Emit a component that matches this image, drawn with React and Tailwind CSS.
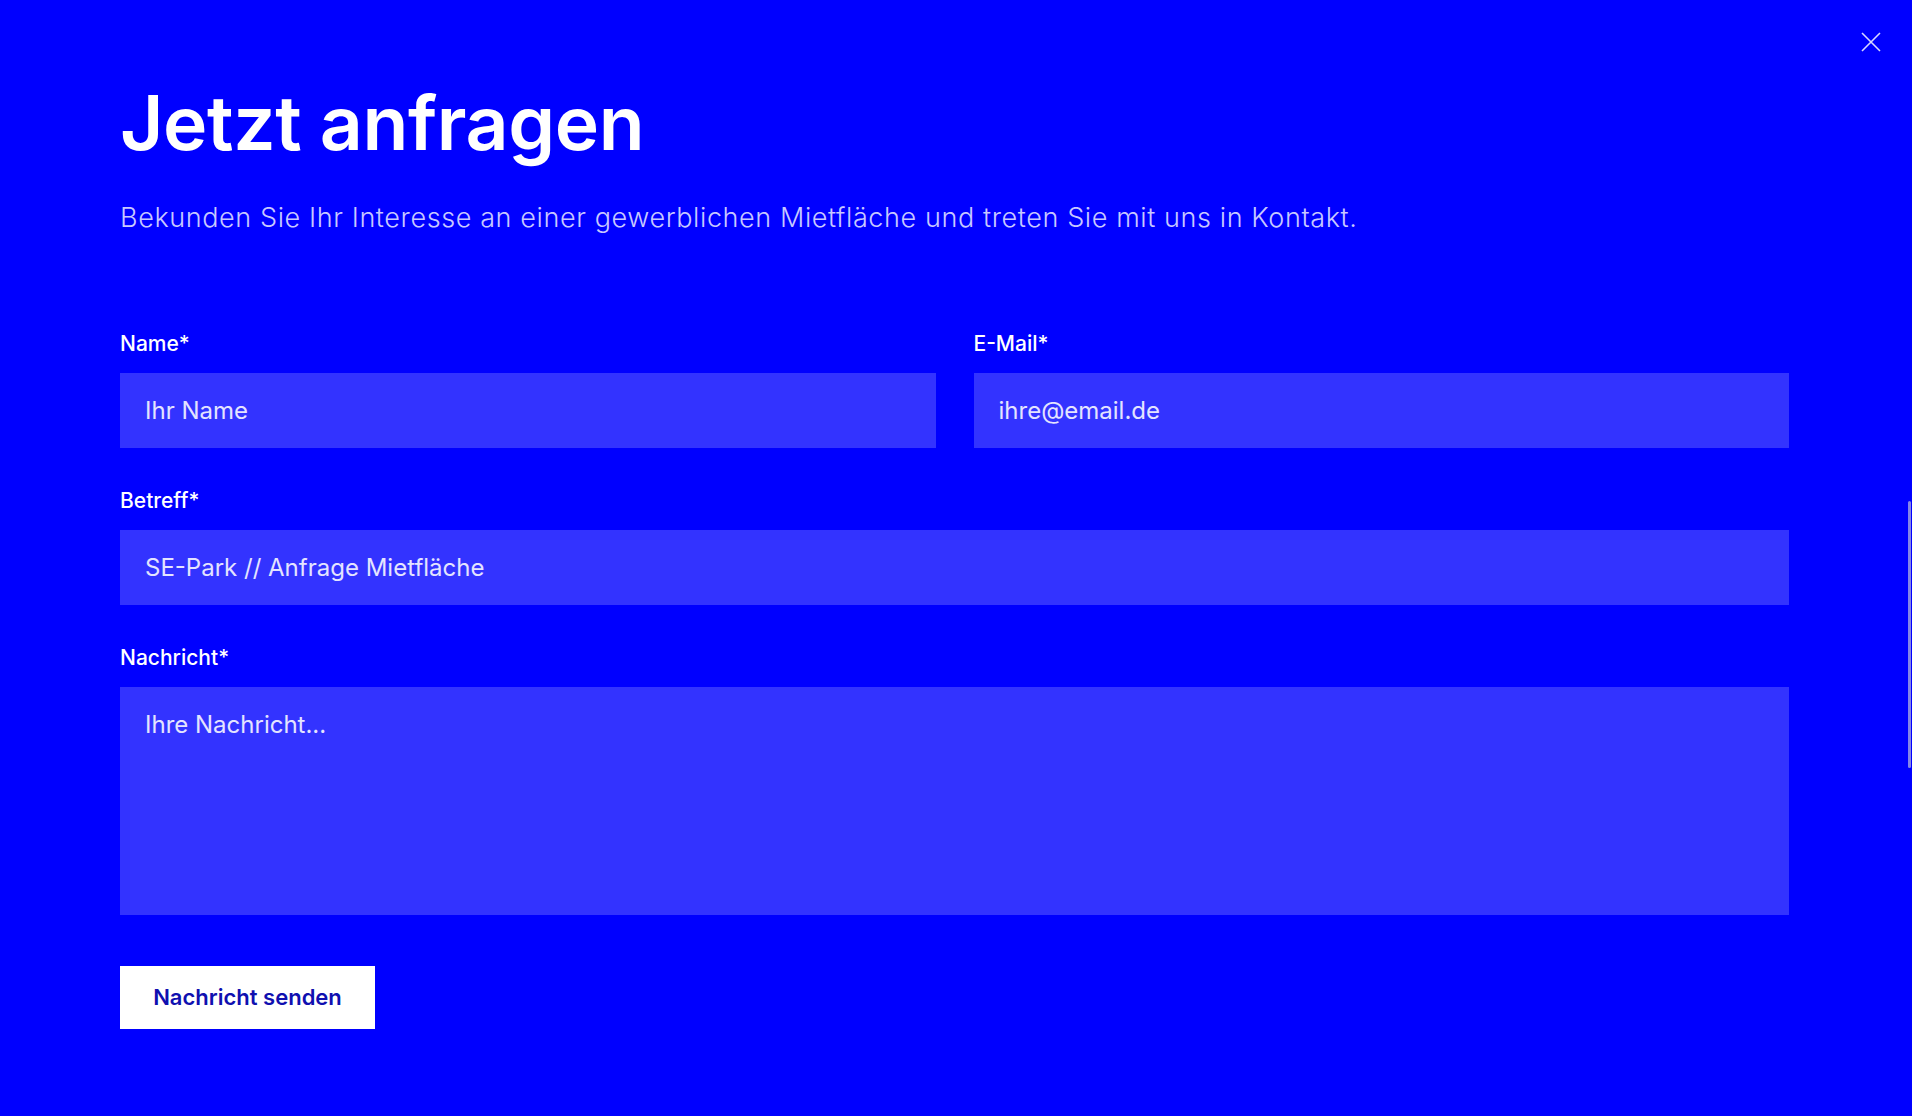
function Field({ label, placeholder, className = '' }) {
  return (
    <label className={`flex flex-col ${className}`}>
      <span className="text-[21px] leading-6 font-medium text-white mb-[17px]">{label}</span>
      <input
        type="text"
        placeholder={placeholder}
        className="h-[75px] bg-[#3333ff] px-[25px] text-[24px] text-white placeholder:text-[#e4e4ff] outline-none"
      />
    </label>
  );
}

export default function App() {
  return (
    <div
      className="relative min-h-[1116px] bg-[#0000ff] pl-[120px] pr-[123px] pt-[79px] text-white"
      style={{ fontFamily: 'Inter, "Noto Sans", sans-serif' }}
    >
      {/* close */}
      <button className="absolute top-[32px] right-[31px] text-[#d8d8ff]">
        <svg width="20" height="20" viewBox="0 0 20 20" fill="none" stroke="currentColor" strokeWidth="1.6">
          <path d="M1 1L19 19M19 1L1 19" />
        </svg>
      </button>

      {/* scrollbar thumb */}
      <div className="absolute right-[1px] top-[501px] w-[3px] h-[267px] rounded-full bg-[#8585e8]"></div>

      <h1 className="text-[75px] leading-[88px] font-semibold tracking-[-0.005em]">Jetzt anfragen</h1>
      <p className="mt-[35px] text-[27px] leading-8 font-light tracking-[0.6px] text-[#c8c8ff]">
        Bekunden Sie Ihr Interesse an einer gewerblichen Mietfläche und treten Sie mit uns in Kontakt.
      </p>

      <form className="mt-[98px] flex flex-col gap-[41px]" onSubmit={(e) => e.preventDefault()}>
        <div className="grid grid-cols-2 gap-[38px]">
          <Field label="Name*" placeholder="Ihr Name" />
          <Field label="E-Mail*" placeholder="ihre@email.de" />
        </div>
        <Field label="Betreff*" placeholder="SE-Park // Anfrage Mietfläche" />
        <label className="flex flex-col">
          <span className="text-[21px] leading-6 font-medium text-white mb-[17px]">Nachricht*</span>
          <textarea
            placeholder="Ihre Nachricht..."
            className="h-[228px] resize-none bg-[#3333ff] px-[25px] py-[20px] text-[24px] text-white placeholder:text-[#e4e4ff] outline-none"
          ></textarea>
        </label>
        <div className="pt-[10px]">
          <button className="h-[63px] w-[255px] bg-white text-[22px] font-semibold text-[#1010b0]">
            Nachricht senden
          </button>
        </div>
      </form>
    </div>
  );
}
